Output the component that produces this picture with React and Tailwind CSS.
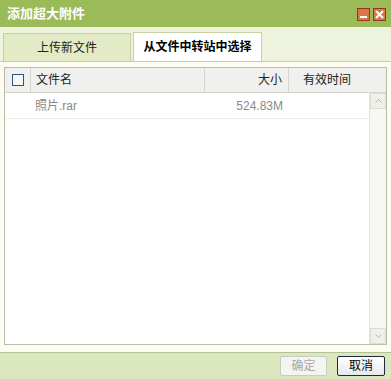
import React from 'react';

const font = { fontFamily: '"Liberation Sans", "Noto Sans CJK SC", sans-serif' };

const TitleButton = ({ children }) => (
  <div className="w-[13px] h-[13px] bg-[#d9774a] border border-[#8f3b1e] flex items-center justify-center">
    {children}
  </div>
);

export default function App() {
  return (
    <div className="w-[391px] h-[379px] flex flex-col bg-[#fcfcf0] text-[12px]" style={font}>
      {/* title bar */}
      <div className="h-[27px] shrink-0 bg-[#9bbb59] flex items-center justify-between pl-[7px] pr-[5px]">
        <span className="text-white font-bold text-[13px]">添加超大附件</span>
        <div className="flex gap-[3px] mt-[1px]">
          <TitleButton>
            <div className="w-[7px] h-[2px] bg-white mt-[5px]" />
          </TitleButton>
          <TitleButton>
            <svg width="9" height="9" viewBox="0 0 9 9">
              <path d="M1 1 L8 8 M8 1 L1 8" stroke="white" strokeWidth="2" />
            </svg>
          </TitleButton>
        </div>
      </div>

      {/* tabs */}
      <div className="h-[34px] shrink-0 bg-[#eef3dd] flex items-end pl-[3px] gap-[2px]">
        <div className="w-[128px] h-[28px] bg-[#e2ebc6] border border-b-0 border-[#c3d2a0] flex items-center justify-center text-[#222]">
          上传新文件
        </div>
        <div className="w-[129px] h-[29px] bg-white border border-b-0 border-[#c3d2a0] flex items-center justify-center font-bold text-black">
          从文件中转站中选择
        </div>
      </div>

      {/* content */}
      <div className="shrink-0 bg-[#fcfcf0] px-[4px] pt-[5px] pb-[7px] border-t border-[#c3d2a0]">
        <div className="h-[278px] bg-white border border-[#b8bcaa] flex flex-col">
          <div className="h-[25px] bg-[#f0f0ee] border-b border-[#d6d6d0] flex items-center text-[#222]">
            <div className="w-[26px] flex items-center justify-center border-r border-[#d6d6d0] h-full">
              <div className="w-[12px] h-[12px] border border-[#35507a] bg-[#f4f6f8]" />
            </div>
            <div className="w-[174px] pl-[5px] border-r border-[#d6d6d0] h-full flex items-center">文件名</div>
            <div className="w-[84px] pr-[6px] border-r border-[#d6d6d0] h-full flex items-center justify-end">大小</div>
            <div className="flex-1 h-full flex items-center pl-[14px]">有效时间</div>
          </div>
          <div className="flex-1 flex">
            <div className="flex-1 flex flex-col">
              <div className="h-[26px] border-b border-[#ecece4] flex items-center text-[#8a8a8a]">
                <div className="w-[26px]" />
                <div className="w-[174px] pl-[4px]">照片.rar</div>
                <div className="w-[84px] pr-[6px] text-right">524.83M</div>
              </div>
            </div>
            <div className="w-[17px] bg-[#f7f7f4] border-l border-[#e4e4dc] flex flex-col justify-between">
              <div className="h-[16px] bg-[#f0f0ea] border border-[#dedcd0] flex items-center justify-center">
                <svg width="7" height="4" viewBox="0 0 7 4"><path d="M0.5 3.5 L3.5 0.5 L6.5 3.5" stroke="#b8b8b0" fill="none" /></svg>
              </div>
              <div className="h-[16px] bg-[#f0f0ea] border border-[#dedcd0] flex items-center justify-center">
                <svg width="7" height="4" viewBox="0 0 7 4"><path d="M0.5 0.5 L3.5 3.5 L6.5 0.5" stroke="#b8b8b0" fill="none" /></svg>
              </div>
            </div>
          </div>
        </div>
      </div>

      {/* footer */}
      <div className="flex-1 bg-[#dbe7bf] border-t border-[#b4c098] flex items-center justify-end gap-[10px] pr-[6px]">
        <div className="w-[47px] h-[20px] border border-[#c8ccc0] bg-[#f4f4f0] text-[#a8a8a8] flex items-center justify-center rounded-[2px]">
          确定
        </div>
        <div className="w-[48px] h-[20px] border border-[#1c2a40] bg-gradient-to-b from-white to-[#e6e8ee] text-black flex items-center justify-center rounded-[2px]">
          取消
        </div>
      </div>
    </div>
  );
}
